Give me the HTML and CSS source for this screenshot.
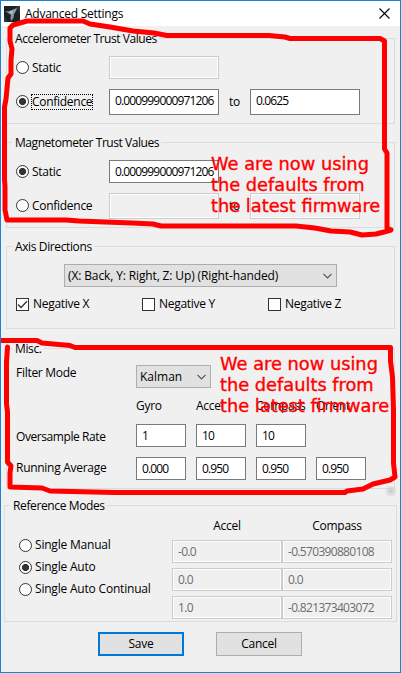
FILE: index.html
```html
<!DOCTYPE html>
<html lang="en">
<head>
<meta charset="utf-8">
<title>Advanced Settings</title>
<link rel="stylesheet" href="styles.css">
</head>
<body>
<main class="window">
  <header class="titlebar">
    <svg class="app-icon" width="16" height="16" viewBox="0 0 16 16"><rect width="16" height="16" fill="#1b2226"/><path d="M0 10l4 6H0zM11 0h5v7z" fill="#2f3a40"/><path d="M1 5l3 .5L8 4l2-1 3-1-1 3-2 3-.5 4L7 15l-.5-3 .500-3L4 7z" fill="#8799a3"/><path d="M5 6l4-1.500L8 8z" fill="#b9c8d0"/></svg>
    <h1>Advanced Settings</h1>
    <svg class="close" width="11" height="11" viewBox="0 0 11 11"><path d="M.5.5l10 10M10.500.5l-10 10" stroke="#000" stroke-width="1.1"/></svg>
  </header>

  <section class="group accelerometer">
    <h2 class="trust-title">Accelerometer Trust Values</h2>
    <div class="row static-row"><span class="choice"><i class="radio"></i><span>Static</span></span><span class="field disabled"></span></div>
    <div class="row confidence-row"><span class="choice"><i class="radio on"></i><span class="focus">Confidence</span></span><span class="field">0.000999000971206</span><span class="to">to</span><span class="field">0.0625</span></div>
  </section>

  <section class="group magnetometer">
    <h2 class="trust-title">Magnetometer Trust Values</h2>
    <div class="row static-row"><span class="choice"><i class="radio on"></i><span>Static</span></span><span class="field">0.000999000971206</span></div>
    <div class="row confidence-row"><span class="choice"><i class="radio"></i><span>Confidence</span></span><span class="field disabled"></span><span class="to">to</span><span class="field disabled"></span></div>
  </section>

  <section class="group axis">
    <h2>Axis Directions</h2>
    <div class="select axis-select"><span>(X: Back, Y: Right, Z: Up) (Right-handed)</span><svg width="9" height="6" viewBox="0 0 9 6"><path d="M.5.8l4 4 4-4" fill="none" stroke="#555" stroke-width="1.2"/></svg></div>
    <div class="checks">
      <span><i class="box"><svg width="11" height="11" viewBox="0 0 11 11"><path d="M1 5.500l3 3L10 2.300" fill="none" stroke="#333" stroke-width="1.300"/></svg></i>Negative X</span>
      <span><i class="box"></i>Negative Y</span>
      <span><i class="box"></i>Negative Z</span>
    </div>
  </section>

  <section class="group misc">
    <h2>Misc.</h2>
    <div class="misc-grid">
      <span class="filter-label">Filter Mode</span>
      <div class="select filter-select"><span>Kalman</span><svg width="9" height="6" viewBox="0 0 9 6"><path d="M.5.8l4 4 4-4" fill="none" stroke="#555" stroke-width="1.2"/></svg></div>
      <span class="col-first">Gyro</span><span>Accel</span><span>Compass</span><span>Orient</span>
      <span class="rate-label">Oversample Rate</span><span class="field">1</span><span class="field">10</span><span class="field">10</span>
      <span class="average-label">Running Average</span><span class="field">0.000</span><span class="field">0.950</span><span class="field">0.950</span><span class="field">0.950</span>
    </div>
  </section>

  <section class="group reference">
    <h2>Reference Modes</h2>
    <div class="reference-body">
      <div class="modes">
        <span class="choice"><i class="radio"></i><span>Single Manual</span></span>
        <span class="choice"><i class="radio on"></i><span>Single Auto</span></span>
        <span class="choice"><i class="radio"></i><span>Single Auto Continual</span></span>
      </div>
      <div class="values">
        <b>Accel</b><b>Compass</b>
        <span class="field disabled">-0.0</span><span class="field disabled">-0.570390880108</span>
        <span class="field disabled">0.0</span><span class="field disabled">0.0</span>
        <span class="field disabled">1.0</span><span class="field disabled">-0.821373403072</span>
      </div>
    </div>
  </section>

  <footer class="actions"><span class="button primary">Save</span><span class="button">Cancel</span></footer>

  <svg class="marks" width="401" height="673" viewBox="0 0 401 673">
    <defs><filter id="soft"><feGaussianBlur stdDeviation="2"/></filter></defs>
    <circle cx="391" cy="491" r="4" fill="#c8c8c8" filter="url(#soft)"/>
    <g fill="none" stroke="#f00" stroke-width="5" stroke-linejoin="round" stroke-linecap="round">
      <path d="M10 28L13 25L27 21H83L90 24L110 27L133 31L154 33L167 35.500H269L285 37L290 38.500H380L384.500 41V149L387 153V228L391 230L384 232L376 234L362 235L350 232L331 231L315 228L296 226H161L153 224L132 223L105 222L79 221L66 220H7L5 210V186L4.500 180V107L6 99L8 78L11 74V60L12 49L10 41Z"/>
      <path d="M0 340.500H37L42 343L70 345.500L75 347.500H390.500V361L392.500 377L393.500 410V463L395 477L390 480L373 484L363 489L347 491L345 492.500H115L50 491L42 488L10 487V473L11 466L7.500 462V412L6.500 404V362L7.500 347"/>
    </g>
  </svg>
  <p class="note note-top">We are now using<br>the defaults from<br>the latest firmware</p>
  <p class="note note-bottom">We are now using<br>the defaults from<br>the latest firmware</p>
</main>
</body>
</html>
```
FILE: styles.css
```css
* { box-sizing: border-box; }
body { margin: 0; font: 12px/16px "Open Sans", "Noto Sans", sans-serif; letter-spacing: -0.28px; color: #000; }
.window { position: relative; width: 401px; height: 673px; background: #f0f0f0; border: 1px solid #1883d7; overflow: hidden; white-space: nowrap; }
.titlebar { display: flex; align-items: center; height: 25px; background: #fff; padding: 0 10px 0 3px; }
.titlebar h1 { margin: 0 auto 0 5px; font-size: 12px; font-weight: 400; letter-spacing: -0.25px; }
.close { display: block; }

.group { border: 1px solid #dcdcdc; margin: 0 5px; width: 389px; }
.group h2 { width: max-content; height: 16px; margin: -8px 0 0 5px; padding: 0 2px 0 3px; background: #f0f0f0; font-size: 12px; font-weight: 400; line-height: 16px; letter-spacing: -0.38px; }
.group .trust-title { letter-spacing: -0.44px; }
.accelerometer { height: 86px; margin-top: 12px; }
.magnetometer { height: 86px; margin-top: 18px; }
.axis { height: 83px; margin-top: 18px; }
.misc { height: 141px; margin-top: 19px; }
.reference { width: 393px; height: 117px; margin: 16px 0 0 3px; }

.row { display: flex; align-items: center; padding-left: 9px; }
.static-row { height: 23px; margin-top: 9px; }
.confidence-row { height: 26px; margin-top: 10px; }
.row .choice { width: 93px; }
.row .field { width: 110px; height: 100%; }
.to { width: 31px; padding-left: 10px; }
.choice { display: flex; align-items: center; gap: 2px; }
.choice span { padding: 0 1px; }
.radio { width: 13px; height: 13px; border: 1px solid #333; border-radius: 50%; background: #fff; flex: none; }
.radio.on { background: radial-gradient(circle, #333 3.2px, #fff 3.9px); }
.confidence-row .radio { margin-top: -1px; }
.focus { outline: 1px dotted #000; outline-offset: -1px; }
.field { display: block; height: 23px; padding: 2px 5px; border: 1px solid #7a7a7a; background: #fff; line-height: 17px; letter-spacing: -0.85px; overflow: hidden; }
.field.disabled { border-color: #ccc; background: #f0f0f0; color: #6d6d6d; box-shadow: inset 0 0 0 1px #fff; letter-spacing: -0.68px; }

.select { display: flex; align-items: center; justify-content: space-between; height: 23px; padding: 0 4px 0 3px; border: 1px solid #adadad; background: #e1e1e1; }
.axis-select { width: 273px; margin: 9px 0 0 57px; letter-spacing: -0.13px; }
.checks { display: grid; grid-template-columns: 126px 126px auto; margin: 9px 0 0 9px; }
.checks span { display: flex; align-items: center; gap: 4px; }
.box { width: 13px; height: 13px; border: 1px solid #333; background: #fff; }
.box svg { display: block; }

.misc-grid { display: grid; grid-template-columns: 110px repeat(4, 50px); grid-template-rows: 23px 16px 23px 23px; gap: 10px; margin: 8px 0 0 9px; }
.filter-select { grid-column: 2 / 5; width: 75px; letter-spacing: 0; }
.col-first { grid-column: 2; }
.rate-label { grid-column: 1; padding-top: 5px; letter-spacing: -0.42px; }
.average-label { grid-column: 1; padding-top: 3px; }

.reference-body { display: flex; padding-left: 14px; }
.modes { display: grid; grid-template-rows: repeat(3, 22px); width: 153px; padding-top: 20px; letter-spacing: -0.2px; }
.values { display: grid; grid-template-columns: 110px 110px; grid-template-rows: 18px repeat(3, 23px); row-gap: 5px; padding-top: 3px; }
.values b { font-weight: 400; text-align: center; line-height: 18px; }

.actions { display: flex; gap: 32px; margin: 10px 0 0 97px; }
.button { width: 86px; height: 24px; border: 1px solid #adadad; background: #e1e1e1; line-height: 21px; text-align: center; }
.primary { border: 2px solid #0078d7; line-height: 19px; }

.marks { position: absolute; left: -1px; top: -1px; }
.note { position: absolute; margin: 0; color: #f00; font: 17.8px/21px "DejaVu Sans", sans-serif; letter-spacing: 0; -webkit-text-stroke: 0.35px #f00; }
.note-top { left: 210px; top: 152px; }
.note-bottom { left: 219px; top: 352px; }
```
